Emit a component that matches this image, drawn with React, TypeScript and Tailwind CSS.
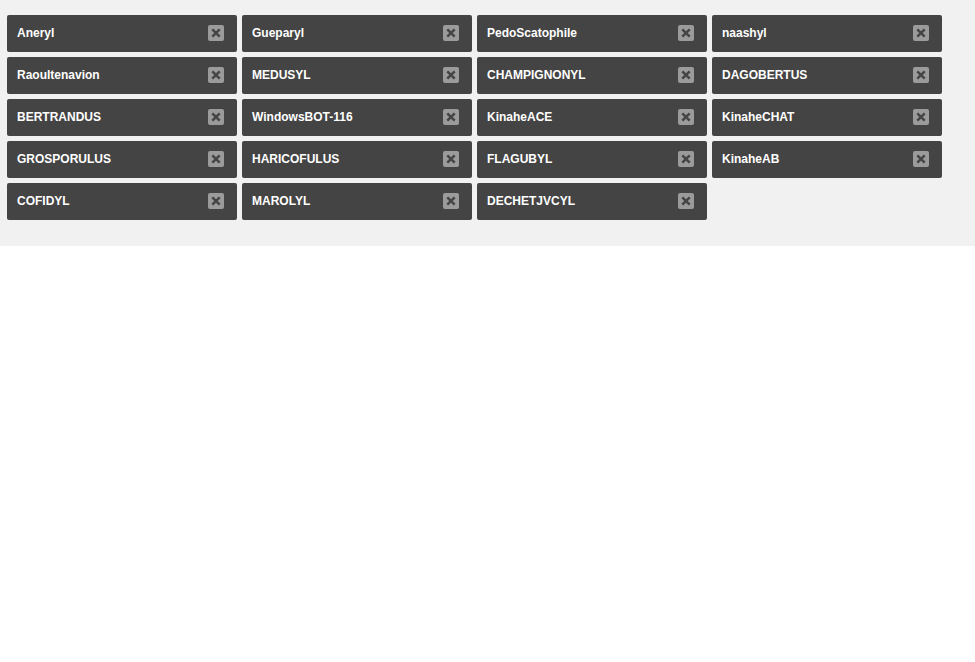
import React from "react";

const names = [
  "Aneryl", "Gueparyl", "PedoScatophile", "naashyl",
  "Raoultenavion", "MEDUSYL", "CHAMPIGNONYL", "DAGOBERTUS",
  "BERTRANDUS", "WindowsBOT-116", "KinaheACE", "KinaheCHAT",
  "GROSPORULUS", "HARICOFULUS", "FLAGUBYL", "KinaheAB",
  "COFIDYL", "MAROLYL", "DECHETJVCYL",
];

function CloseIcon() {
  return (
    <span className="flex h-[16px] w-[16px] items-center justify-center rounded-[2px] bg-[#9b9b9b]">
      <svg width="10" height="10" viewBox="0 0 10 10">
        <path d="M1.3 1.3 L8.7 8.7 M8.7 1.3 L1.3 8.7" stroke="#454545" strokeWidth="2.5" strokeLinecap="butt" />
      </svg>
    </span>
  );
}

export default function App() {
  return (
    <div className="min-h-[662px] bg-white" style={{ fontFamily: '"Liberation Sans", Arial, sans-serif' }}>
      <div className="bg-[#f1f1f1] pl-[7px] pt-[15px] pb-[26px]">
        <div className="flex w-[950px] flex-wrap gap-[5px]">
          {names.map((n) => (
            <div
              key={n}
              className="flex h-[37px] w-[230px] items-center justify-between rounded-[2px] bg-[#444444] pb-[2px] pl-[10px] pr-[13px]"
            >
              <span className="text-[12px] font-bold text-white">{n}</span>
              <CloseIcon />
            </div>
          ))}
        </div>
      </div>
    </div>
  );
}
